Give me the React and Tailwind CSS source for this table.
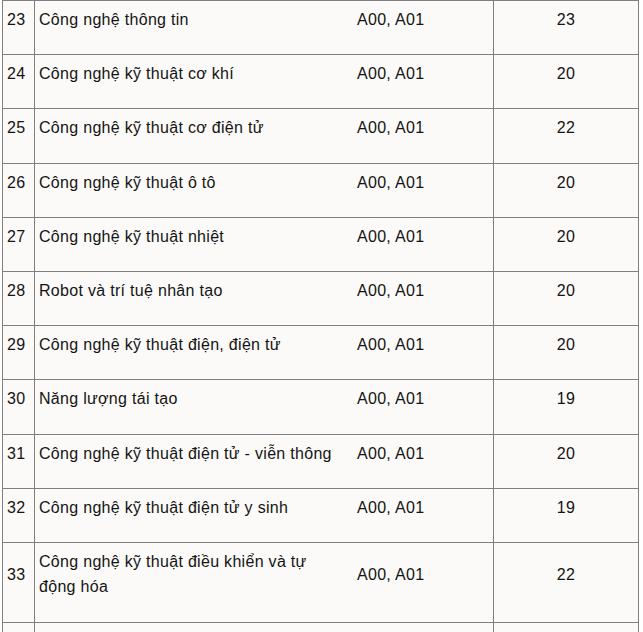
import React from "react";

const rows = [
  ["23", "Công nghệ thông tin", "A00, A01", "23"],
  ["24", "Công nghệ kỹ thuật cơ khí", "A00, A01", "20"],
  ["25", "Công nghệ kỹ thuật cơ điện tử", "A00, A01", "22"],
  ["26", "Công nghệ kỹ thuật ô tô", "A00, A01", "20"],
  ["27", "Công nghệ kỹ thuật nhiệt", "A00, A01", "20"],
  ["28", "Robot và trí tuệ nhân tạo", "A00, A01", "20"],
  ["29", "Công nghệ kỹ thuật điện, điện tử", "A00, A01", "20"],
  ["30", "Năng lượng tái tạo", "A00, A01", "19"],
  ["31", "Công nghệ kỹ thuật điện tử - viễn thông", "A00, A01", "20"],
  ["32", "Công nghệ kỹ thuật điện tử y sinh", "A00, A01", "19"],
  ["33", ["Công nghệ kỹ thuật điều khiển và tự", "động hóa"], "A00, A01", "22"],
];

function Cell({ className = "", children }) {
  return (
    <div className={"flex items-center px-[4px] pt-[6px] pb-[21.6px] " + className}>
      <div>{children}</div>
    </div>
  );
}

export default function App() {
  return (
    <div
      className="w-[643px] h-[632px] overflow-hidden bg-white text-[#141414] text-[16px] leading-[25.6px] tracking-[0.3px]"
      style={{ fontFamily: '"Liberation Sans", Arial, sans-serif' }}
    >
      <div className="ml-[2px] w-[637px] border-l border-t border-r border-[#808080] bg-[#fbfaf8]">
        {rows.map((r) => (
          <div key={r[0]} className="flex border-b border-[#808080]">
            <Cell className="w-[32px] shrink-0 border-r border-[#808080]">{r[0]}</Cell>
            <Cell className="w-[318px] shrink-0">
              {Array.isArray(r[1]) ? (
                <>
                  {r[1][0]}
                  <br />
                  {r[1][1]}
                </>
              ) : (
                r[1]
              )}
            </Cell>
            <Cell className="w-[141px] shrink-0 border-r border-[#808080]">{r[2]}</Cell>
            <Cell className="flex-1 justify-center text-center">{r[3]}</Cell>
          </div>
        ))}
        <div className="flex h-[54px]">
          <div className="w-[32px] shrink-0 border-r border-[#808080]" />
          <div className="w-[318px] shrink-0" />
          <div className="w-[141px] shrink-0 border-r border-[#808080]" />
          <div className="flex-1" />
        </div>
      </div>
    </div>
  );
}
